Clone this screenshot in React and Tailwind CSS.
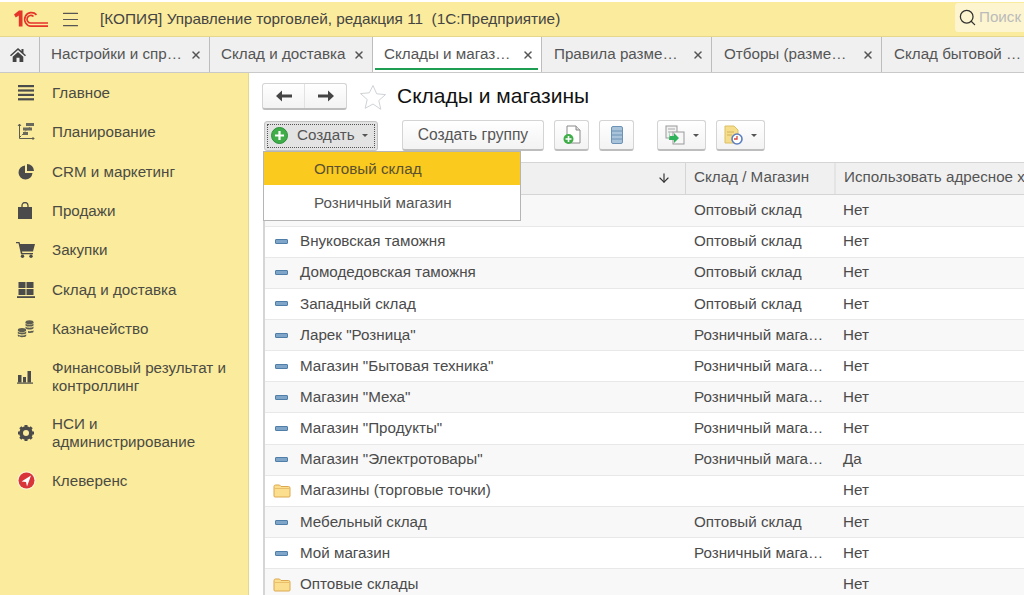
import { X, Search, ArrowDown, Menu } from 'lucide-react';

const TABS = [
  { title: 'Настройки и спр…', cls: 'w-[170px] pl-[11px]' },
  { title: 'Склад и доставка', cls: 'w-[163px] pl-[11px]' },
  { title: 'Склады и магаз…', cls: 'w-[169px] pl-[11px]', active: true },
  { title: 'Правила разме…', cls: 'w-[170px] pl-[12px]' },
  { title: 'Отборы (разме…', cls: 'w-[170px] pl-[12px]' },
  { title: 'Склад бытовой …', cls: 'w-[170px] pl-[12px]', noClose: true },
];

const ROWS = [
  { name: '', kind: 'Оптовый склад', addr: 'Нет', hidden: true },
  { name: 'Внуковская таможня', kind: 'Оптовый склад', addr: 'Нет' },
  { name: 'Домодедовская таможня', kind: 'Оптовый склад', addr: 'Нет' },
  { name: 'Западный склад', kind: 'Оптовый склад', addr: 'Нет' },
  { name: 'Ларек "Розница"', kind: 'Розничный мага…', addr: 'Нет' },
  { name: 'Магазин "Бытовая техника"', kind: 'Розничный мага…', addr: 'Нет' },
  { name: 'Магазин "Меха"', kind: 'Розничный мага…', addr: 'Нет' },
  { name: 'Магазин "Продукты"', kind: 'Розничный мага…', addr: 'Нет' },
  { name: 'Магазин "Электротовары"', kind: 'Розничный мага…', addr: 'Да' },
  { name: 'Магазины (торговые точки)', kind: '', addr: 'Нет', folder: true },
  { name: 'Мебельный склад', kind: 'Оптовый склад', addr: 'Нет' },
  { name: 'Мой магазин', kind: 'Розничный мага…', addr: 'Нет' },
  { name: 'Оптовые склады', kind: '', addr: 'Нет', folder: true },
];

function Logo() {
  return (
    <svg width="34" height="18" viewBox="0 0 34 18" fill="none">
      <path d="M0 4.500 L5 .5 H8.500 V16.500 H4.800 V5.500 L1.800 7.500 Z" fill="#e5352b" />
      <path d="M22.500 4.800 A6.800 6.800 0 1 0 17 16.200 H34" stroke="#e5352b" strokeWidth="1.700" />
      <path d="M19.500 6.500 A3.800 3.800 0 1 0 17 13 H34" stroke="#e5352b" strokeWidth="1.700" />
    </svg>
  );
}

const icons = {
  main: (
    <svg width="18" height="18" viewBox="0 0 18 18" fill="#4b4b4b">
      <rect x="1" y="1" width="16" height="2.200" />
      <rect x="1" y="5.400" width="16" height="2.200" />
      <rect x="1" y="9.800" width="16" height="2.200" />
      <rect x="1" y="14.200" width="16" height="2.200" />
    </svg>
  ),
  plan: (
    <svg width="18" height="18" viewBox="0 0 18 18" fill="none" stroke="#5c5c50" strokeWidth="1">
      <path d="M2.500 1v14.500H17" />
      <path d="M1 3l1.500-2L4 3M15.500 14l1.500 1.500-1.500 1.500" />
      <path d="M3 14l4-4 3-4 4-2" strokeDasharray="1.500 1" />
      <rect x="9" y="0" width="8" height="3" fill="#6a6a5c" stroke="none" />
      <rect x="6" y="4.500" width="9" height="3" fill="#6a6a5c" stroke="none" />
      <rect x="6" y="9" width="5" height="3" fill="#6a6a5c" stroke="none" />
    </svg>
  ),
  crm: (
    <svg width="18" height="18" viewBox="0 0 18 18" fill="#4b4b4b">
      <path d="M8 2.500A7 7 0 1 0 15.500 10H8Z" />
      <path d="M10 1a7 7 0 0 1 7 7h-7Z" />
    </svg>
  ),
  sales: (
    <svg width="16" height="18" viewBox="0 0 16 18" fill="#4b4b4b">
      <path d="M1 5h14v12H1Z" />
      <path d="M5 7V3.500a3 3 0 0 1 6 0V7" fill="none" stroke="#4b4b4b" strokeWidth="1.300" />
    </svg>
  ),
  buy: (
    <svg width="19" height="16" viewBox="0 0 19 16" fill="#4b4b4b" className="-ml-[1px]">
      <path d="M0 0h3.500l.6 2H19l-2 7.500H6l.3 1.500H17v1.300H5L2.500 1.300H0Z" />
      <circle cx="6.500" cy="14.300" r="1.700" />
      <circle cx="15" cy="14.300" r="1.700" />
    </svg>
  ),
  stock: (
    <svg width="18" height="18" viewBox="0 0 18 18" fill="#4b4b4b">
      <rect x="1.500" y="1" width="7" height="6" />
      <rect x="9.500" y="1" width="7" height="6" />
      <rect x="1.500" y="8" width="7" height="6" />
      <rect x="9.500" y="8" width="7" height="6" />
      <rect x="0" y="15.200" width="18" height="1.800" />
    </svg>
  ),
  money: (
    <svg width="18" height="18" viewBox="0 0 18 18" fill="#5c5c50">
      <ellipse cx="12.500" cy="2.200" rx="4" ry="2" />
      <path d="M8.500 3.600c1 1.600 7 1.600 8 0v1.800c-1 1.600-7 1.600-8 0Z" />
      <path d="M8.500 6.500c1 1.600 7 1.600 8 0v1.800c-1 1.600-7 1.600-8 0Z" />
      <path d="M11 11c2 .4 4.500.2 5.500-.7v1.800c-1 1-3.500 1-5.500.7Z" />
      <ellipse cx="5" cy="10" rx="4.200" ry="2" />
      <path d="M.8 11.400c1 1.600 7.400 1.600 8.400 0v1.800c-1 1.600-7.400 1.600-8.400 0Z" />
      <path d="M.8 14.300c1 1.600 7.400 1.600 8.400 0v1.800c-1 1.600-7.400 1.600-8.400 0Z" />
    </svg>
  ),
  fin: (
    <svg width="16" height="14" viewBox="0 0 16 14" fill="#4b4b4b">
      <rect x="1" y="5" width="3.500" height="7.500" />
      <rect x="6" y="7" width="3" height="5.500" />
      <rect x="10.500" y="1" width="3.500" height="11.500" />
      <rect x="0" y="12.500" width="16" height="1.200" />
    </svg>
  ),
  gear: (
    <svg width="18" height="18" viewBox="0 0 18 18">
      <circle cx="9" cy="9" r="5" fill="none" stroke="#4b4b4b" strokeWidth="3.600" />
      <path d="M9 1v16M1 9h16M3.300 3.300l11.400 11.400M14.700 3.300 3.300 14.700" stroke="#4b4b4b" strokeWidth="3" />
      <circle cx="9" cy="9" r="3" fill="#fbeb9c" />
    </svg>
  ),
  klev: (
    <svg width="19" height="19" viewBox="0 0 19 19">
      <circle cx="9.500" cy="9.500" r="9.200" fill="#fdf6d8" />
      <circle cx="9.500" cy="9.500" r="8" fill="#d8343a" />
      <path d="M14 4.500 4.500 10.500 9 11l1 4.500Z" fill="#fff" />
    </svg>
  ),
};

const NAV = [
  { icon: 'main', label: 'Главное', h: 'h-[39px]' },
  { icon: 'plan', label: 'Планирование', h: 'h-[40px]' },
  { icon: 'crm', label: 'CRM и маркетинг', h: 'h-[39px]' },
  { icon: 'sales', label: 'Продажи', h: 'h-[39px]' },
  { icon: 'buy', label: 'Закупки', h: 'h-[40px]' },
  { icon: 'stock', label: 'Склад и доставка', h: 'h-[39px]' },
  { icon: 'money', label: 'Казначейство', h: 'h-[39px]' },
  { icon: 'fin', label: 'Финансовый результат и контроллинг', h: 'h-[58px]' },
  { icon: 'gear', label: 'НСИ и администрирование', h: 'h-[54px]' },
  { icon: 'klev', label: 'Клеверенс', h: 'h-[41px]' },
];

function Caret() {
  return <span className="w-0 h-0 border-x-[3px] border-x-transparent border-t-[3px] border-t-[#555]" />;
}

function NavArrow({ flip }) {
  return (
    <svg width="16" height="12" viewBox="0 0 16 12" fill="#444" className={flip ? 'rotate-180' : ''}>
      <path d="M0 6 6 .5V4.500h10v3H6v4Z" />
    </svg>
  );
}

function ToolButton({ className, children }) {
  return (
    <button className={`h-[31px] flex items-center justify-center rounded-[3px] border border-[#d4d4d4] border-b-2 border-b-[#bdbdbd] bg-gradient-to-b from-white to-[#f3f3f3] ${className}`}>
      {children}
    </button>
  );
}

function ItemIcon({ folder }) {
  if (folder) {
    return (
      <svg width="18" height="15" viewBox="0 0 18 15">
        <path d="M1 3.500A1.500 1.500 0 0 1 2.500 2h4L8 3.500h7.500A1.500 1.500 0 0 1 17 5v8a1 1 0 0 1-1 1H2a1 1 0 0 1-1-1Z" fill="#fbdf8f" stroke="#dba850" />
        <path d="M1.500 5.500h15" stroke="#e9bf6c" />
      </svg>
    );
  }
  return <span className="block w-[13px] h-[5px] mx-[2px] rounded-[1px] bg-[#7fa6c9] border border-[#4f7ea8]" />;
}

export default function App() {
  return (
    <div className="w-[1024px] h-[595px] overflow-hidden relative bg-white text-[15.2px] text-[#4b4b4b] flex flex-col" style={{ fontFamily: '"Liberation Sans", Arial, sans-serif' }}>
      {/* Title bar */}
      <div className="h-[37px] shrink-0 pt-[2px] bg-white">
        <div className="h-[35px] bg-[#fbeb9c] border-b border-[#e6d78e] flex items-center">
          <div className="ml-[14px] w-[35px]"><Logo /></div>
          <Menu size={21} strokeWidth={1.3} color="#555" className="ml-[11px]" />
          <span className="ml-[19px] text-[#444] whitespace-pre text-[15.35px]">[КОПИЯ] Управление торговлей, редакция 11  (1С:Предприятие)</span>
          <div className="ml-auto h-[29px] w-[69px] bg-[#fdf5cf] rounded-l-[3px] flex items-center pl-[3px] gap-[2px] -mt-[3px]">
            <Search size={19} strokeWidth={1.6} color="#333" />
            <span className="text-[#bbb]">Поиск</span>
          </div>
        </div>
      </div>

      {/* Tabs */}
      <div className="h-[36px] shrink-0 flex bg-[#f0f0f0] border-b border-[#c9c9c9] whitespace-nowrap overflow-hidden">
        <div className="w-[40px] shrink-0 flex items-center justify-center border-r border-[#bdbdbd]">
          <svg width="16" height="14" viewBox="0 0 16 14" fill="#444" className="-ml-[3px]">
            <path d="M8 0 0 7.200l1 1L8 2l7 6.200 1-1-2.500-2.300V1h-2v2.100Z" />
            <path d="M2.700 8.700 8 4l5.300 4.700V14H9.500V9.800h-3V14H2.700Z" />
          </svg>
        </div>
        {TABS.map(tab => (
          <div key={tab.title} className={`relative shrink-0 flex items-center pr-[7px] border-r border-[#bdbdbd] ${tab.cls} ${tab.active ? 'bg-white' : ''}`}>
            <span className="flex-1 text-[#555]">{tab.title}</span>
            {!tab.noClose && <X size={12} strokeWidth={3} color="#555" />}
            {tab.active && <span className="absolute left-[2px] right-[3px] bottom-[2px] h-[2px] bg-[#1e9e52]" />}
          </div>
        ))}
      </div>

      <div className="flex-1 flex min-h-0">
        {/* Sidebar */}
        <nav className="w-[249px] shrink-0 bg-[#fbeb9c] border-r border-[#e6d78e] pt-[0.4px]">
          {NAV.map(item => (
            <div key={item.label} className={`flex items-center pl-[17px] ${item.h}`}>
              <span className="w-[35px] shrink-0 flex justify-start">{icons[item.icon]}</span>
              <span className="w-[190px] leading-[18px] text-[#4b4b44]">{item.label}</span>
            </div>
          ))}
        </nav>

        {/* Content */}
        <main className="flex-1 min-w-0 pl-[13px] pt-[10px]">
          <div className="flex items-center h-[27px]">
            <div className="w-[85px] h-[27px] flex rounded-[3px] border border-[#d4d4d4] border-b-2 border-b-[#bdbdbd] bg-gradient-to-b from-white to-[#f3f3f3]">
              <span className="w-[42px] flex items-center justify-center border-r border-[#e2e2e2]"><NavArrow /></span>
              <span className="flex-1 flex items-center justify-center"><NavArrow flip /></span>
            </div>
            <svg width="28" height="26" viewBox="0 0 28 26" className="ml-[12px]">
              <path d="M14 1.500l3.700 8.300 8.800.8-6.700 5.900 2 8.800L14 20l-7.800 4.300 2-8.800-6.700-5.900 8.800-.8Z" fill="#fff" stroke="#cfd3d6" />
            </svg>
            <h1 className="ml-[10px] text-[21px] text-[#111] -mt-[1px]">Склады и магазины</h1>
          </div>

          <div className="flex items-center mt-[10px] h-[31px]">
            <div className="w-[114px] h-[30px] ml-[2px] p-[2px] rounded-[3px] bg-[#e3e3e3] border border-[#c4c4c4]">
              <div className="h-full flex items-center border border-dotted border-[#555] pl-[3px]">
                <svg width="17" height="17" viewBox="0 0 17 17">
                  <circle cx="8.500" cy="8.500" r="8" fill="#3fae49" stroke="#2c8f3a" />
                  <path d="M8.500 4v9M4 8.500h9" stroke="#fff" strokeWidth="2.200" />
                </svg>
                <span className="ml-[9px] text-[#555]">Создать</span>
                <span className="ml-[7px] flex"><Caret /></span>
              </div>
            </div>
            <ToolButton className="ml-[24px] w-[142px] text-[#555] text-[15.6px]">Создать группу</ToolButton>
            <ToolButton className="ml-[10px] w-[35px]">
              <svg width="18" height="20" viewBox="0 0 18 20">
                <path d="M4 1h9l4 4v13H4Z" fill="#fff" stroke="#8a8a8a" />
                <path d="M13 1v4h4" fill="#ddd" stroke="#8a8a8a" />
                <circle cx="5.500" cy="14" r="5" fill="#3fae49" />
                <path d="M5.500 11v6M2.500 14h6" stroke="#fff" strokeWidth="1.600" />
              </svg>
            </ToolButton>
            <ToolButton className="ml-[10px] w-[35px]">
              <svg width="12" height="18" viewBox="0 0 12 18">
                <rect x=".5" y=".5" width="11" height="17" rx="1.500" fill="#a9c3da" stroke="#6c93b5" />
                <path d="M1 5h10M1 9h10M1 13h10" stroke="#6c93b5" />
              </svg>
            </ToolButton>
            <ToolButton className="ml-[23px] w-[49px] gap-[8px]">
              <svg width="20" height="20" viewBox="0 0 20 20">
                <rect x="1" y="1" width="11" height="12" fill="#f2f2f2" stroke="#999" />
                <rect x="8" y="7" width="11" height="12" fill="#f7f7f7" stroke="#999" />
                <path d="M3 4h7M3 7h5" stroke="#aaa" />
                <path d="M5 6v5h4V8l5 5-5 5v-3H4Z" fill="#2fb35a" />
              </svg>
              <Caret />
            </ToolButton>
            <ToolButton className="ml-[10px] w-[49px] gap-[8px]">
              <svg width="19" height="20" viewBox="0 0 19 20">
                <path d="M1 1h9l4 4v13H1Z" fill="#f6dd8b" stroke="#dcc067" />
                <path d="M3 7h7M3 10h5" stroke="#d2b25a" />
                <circle cx="13" cy="14" r="5" fill="#fff" stroke="#5b7fc0" strokeWidth="1.600" />
                <path d="M13 11v3h-3" stroke="#d9453d" fill="none" strokeWidth="1.300" />
              </svg>
              <Caret />
            </ToolButton>
          </div>

          {/* Table */}
          <div className="mt-[11px] ml-[1px] border-l-2 border-[#d5d5d5] whitespace-nowrap">
            <div className="h-[33.4px] flex items-center bg-[#f0f0f0] border-y border-[#d5d5d5] -ml-[2px] w-[763px] text-[#555]">
              <div className="w-[423px] h-full shrink-0 flex items-center justify-end pr-[14px] border-r border-[#d5d5d5] pb-[1px]">
                <ArrowDown size={14} strokeWidth={2} color="#333" />
              </div>
              <div className="w-[150px] h-full shrink-0 flex items-center pl-[8px] pb-[2px] border-r-2 border-[#e4e4e4]">Склад / Магазин</div>
              <div className="pl-[8px] pb-[2px] overflow-hidden">Использовать адресное хранение</div>
            </div>
            {ROWS.map((row, i) => (
              <div key={i} className={`h-[31.17px] flex items-center border-b border-[#e8e8e8] ${i % 2 === 0 ? 'bg-[#f8f8f8]' : 'bg-white'}`}>
                <div className="w-[420px] shrink-0 flex items-center pl-[8px] text-[#4b4b4b]">
                  <span className="w-[27px] shrink-0">{!row.hidden && <ItemIcon folder={row.folder} />}</span>
                  <span>{row.name}</span>
                </div>
                <div className="w-[150px] shrink-0 pl-[9px]">{row.kind}</div>
                <div className="pl-[8px]">{row.addr}</div>
              </div>
            ))}
          </div>
        </main>
      </div>

      {/* Create dropdown */}
      <div className="absolute left-[263px] top-[151px] w-[258px] h-[70px] bg-white border border-[#b5b5b5]">
        <div className="h-[33px] bg-[#fbca1e] flex items-center pl-[50px] pt-[1px] text-[#5a5030]">Оптовый склад</div>
        <div className="h-[35px] flex items-center pl-[50px] pt-[1px] text-[#555]">Розничный магазин</div>
      </div>
    </div>
  );
}
